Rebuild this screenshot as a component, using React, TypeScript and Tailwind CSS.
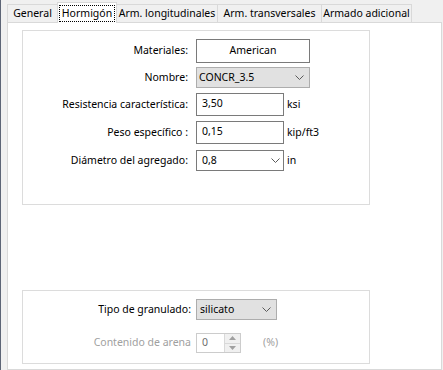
import React from 'react';

const font = { fontFamily: '"Noto Sans", "Open Sans", sans-serif' };

function Chevron() {
  return (
    <svg width="9" height="5" viewBox="0 0 9 5" className="shrink-0">
      <polyline points="0.5,0.5 4.5,4.5 8.5,0.5" fill="none" stroke="#5a5a5a" strokeWidth="1" />
    </svg>
  );
}

function Tab({ label, w, selected }: { label: string; w: string; selected?: boolean }) {
  if (selected) {
    return (
      <div className={`${w} relative z-10 -ml-px -mb-px h-[21px] bg-white border border-b-0 border-[#d9d9d9] flex items-start justify-center pt-[2px]`}>
        <span className="border border-dotted border-black w-[56px] h-[17px] flex items-center justify-center whitespace-nowrap">{label}</span>
      </div>
    );
  }
  return (
    <div className={`${w} -ml-px h-[18px] bg-[#f0f0f0] border border-b-0 border-[#d9d9d9] flex items-center justify-center`}>
      <span className="leading-none whitespace-nowrap">{label}</span>
    </div>
  );
}

function Row({ label, mt, children }: { label: string; mt: string; children: React.ReactNode }) {
  return (
    <div className={`flex items-center ${mt}`}>
      <div className="w-[165px] text-right whitespace-nowrap">{label}</div>
      <div className="ml-[8px] flex items-center">{children}</div>
    </div>
  );
}

export default function App() {
  return (
    <div className="w-[443px] h-[370px] overflow-hidden bg-[#f0f0f0] flex text-[10.5px] text-black" style={font}>
      <div className="w-px self-stretch bg-[#5d6576]" />
      <div className="flex-1 flex flex-col pl-[6px]">
        {/* Tab strip */}
        <div className="h-[22px] flex items-end pl-px">
          <Tab label="General" w="w-[51px]" />
          <Tab label="Hormigón" w="w-[60px]" selected />
          <Tab label="Arm. longitudinales" w="w-[102px]" />
          <Tab label="Arm. transversales" w="w-[105px]" />
          <Tab label="Armado adicional" w="w-[91px]" />
        </div>

        {/* Tab page */}
        <div className="w-[435px] flex-1 bg-white border border-[#d9d9d9] pl-[14px] pt-[7px]">
          <div className="w-[348px] h-[175px] border border-[#dcdcdc]">
            <Row label="Materiales:" mt="mt-[8px]">
              <div className="w-[114px] h-[24px] border border-[#7a7a7a] flex items-center justify-center">American</div>
            </Row>
            <Row label="Nombre:" mt="mt-[4px]">
              <div className="w-[114px] h-[21px] border border-[#adadad] bg-[#e1e1e1] flex items-center justify-between pl-[2px] pr-[5px]">
                <span>CONCR_3.5</span>
                <Chevron />
              </div>
            </Row>
            <Row label="Resistencia característica:" mt="mt-[5px]">
              <div className="w-[88px] h-[23px] border border-[#7a7a7a] flex items-center pl-[5px] pb-[2px]">3,50</div>
              <span className="ml-[3px]">ksi</span>
            </Row>
            <Row label="Peso específico :" mt="mt-[5px]">
              <div className="w-[88px] h-[23px] border border-[#7a7a7a] flex items-center pl-[5px] pb-[2px]">0,15</div>
              <span className="ml-[3px]">kip/ft3</span>
            </Row>
            <Row label="Diámetro del agregado:" mt="mt-[6px]">
              <div className="w-[88px] h-[21px] border border-[#7a7a7a] flex items-center justify-between pl-[5px] pr-[3px]">
                <span>0,8</span>
                <Chevron />
              </div>
              <span className="ml-[3px]">in</span>
            </Row>
          </div>

          <div className="w-[348px] h-[74px] mt-[85px] border border-[#dcdcdc]">
            <div className="flex items-center mt-[8px]">
              <div className="w-[168px] text-right whitespace-nowrap">Tipo de granulado:</div>
              <div className="ml-[5px] w-[81px] h-[21px] border border-[#adadad] bg-[#e1e1e1] flex items-center justify-between pl-[3px] pr-[5px]">
                <span>silicato</span>
                <Chevron />
              </div>
            </div>
            <div className="flex items-center mt-[13px]">
              <div className="w-[168px] text-right whitespace-nowrap text-[#a0a0a0]">Contenido de arena</div>
              <div className="ml-[5px] w-[45px] h-[20px] border border-[#cccccc] flex items-stretch">
                <div className="flex-1 flex items-center pl-[5px] text-[#6d6d6d]">0</div>
                <div className="w-[16px] flex flex-col border-l border-[#d9d9d9] bg-[#f0f0f0]">
                  <div className="flex-1 flex items-center justify-center border-b border-[#d9d9d9]">
                    <svg width="7" height="4" viewBox="0 0 7 4"><polygon points="0,4 3.5,0 7,4" fill="#a0a0a0" /></svg>
                  </div>
                  <div className="flex-1 flex items-center justify-center">
                    <svg width="7" height="4" viewBox="0 0 7 4"><polygon points="0,0 3.5,4 7,0" fill="#a0a0a0" /></svg>
                  </div>
                </div>
              </div>
              <span className="ml-[22px] text-[#a0a0a0]">(%)</span>
            </div>
          </div>
        </div>
      </div>
    </div>
  );
}
